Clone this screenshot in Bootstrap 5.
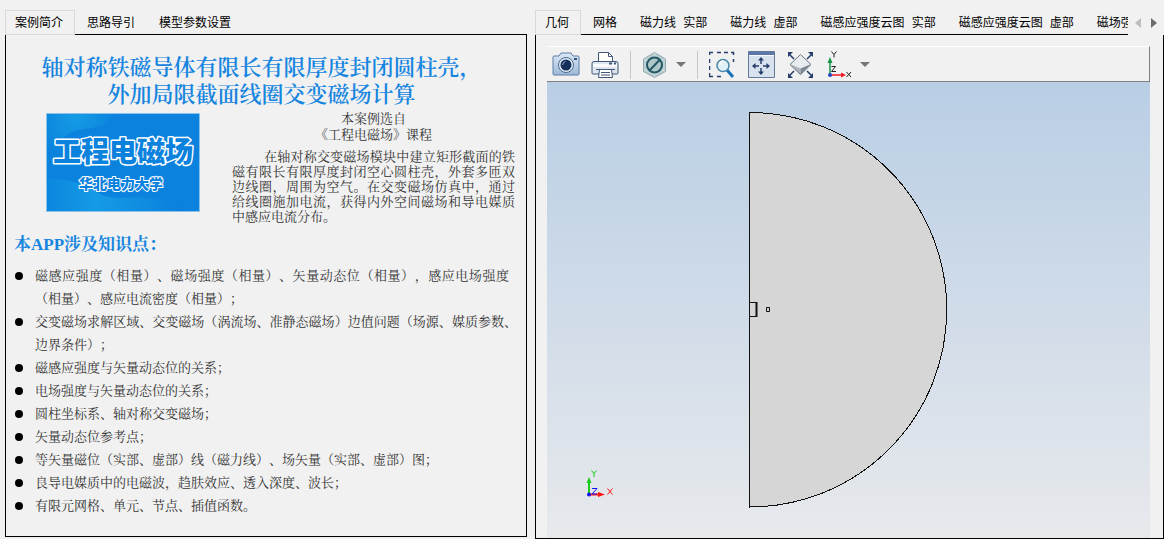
<!DOCTYPE html>
<html lang="zh-CN">
<head>
<meta charset="utf-8">
<meta name="viewport" content="width=device-width, initial-scale=1">
<title>轴对称铁磁导体交变磁场计算</title>
<link href="https://cdn.jsdelivr.net/npm/bootstrap@5.3.0/dist/css/bootstrap.min.css" rel="stylesheet">
<style>
  body { background: #f1f1f1; color: #000; font: 12px/16px "Liberation Mono", "Noto Sans CJK SC", sans-serif; }
  .workspace { display: grid; grid-template-columns: minmax(0, 522fr) minmax(0, 629fr); column-gap: 8px; padding: 10px 0 0 5px; }
  .tab-strip { height: 25px; overflow: hidden; box-shadow: inset 0 -1px #000; }
  .tab-strip button { flex: none; height: 25px; padding: 3px 12px 0; border: 0; background: none; white-space: nowrap; color: #000; }
  .tab-strip.scrollable button { padding-right: 11px; }
  .tab-strip button.active { padding: 3px 11px 0 9px; border: 1px solid #d9d9d9; background: #f1f1f1; }
  .pane { border: 1px solid #000; border-top: 0; }
  .doc { margin-bottom: 2px; padding: 19px 9px 10px 8px; font: 13px/15px "Liberation Serif", "Noto Serif CJK SC", "Noto Sans CJK SC", serif; color: #333; text-spacing-trim: space-all; }
  .doc h1 { font-size: 22px; line-height: 27px; font-weight: 600; color: #1685e0; margin: 0 0 5px; padding-right: 8px; }
  .doc h2 { font-size: 17px; line-height: 20px; font-weight: 700; color: #1685e0; margin: 11px 0 9px; }
  .intro { gap: 32px; padding: 0 2px 0 32px; }
  .cover { width: 154px; height: 99px; flex: none; }
  .course { line-height: 16px; margin: -2px 0 6px; }
  .abstract { text-align: justify; text-indent: 32px; margin: 0; }
  .topics { list-style: none; margin: 0; padding: 0; line-height: 23px; text-align: justify; }
  .topics li { position: relative; padding-left: 21px; }
  .topics li::before { content: ""; position: absolute; left: 1px; top: 8px; width: 8px; height: 8px; border-radius: 50%; background: #000; }
  .scroller { width: 36px; gap: 10px; padding-left: 6px; }
  .scroller button, .tools button { border: 0; padding: 0; background: none; display: flex; align-items: center; }
  .model { padding: 11px 13px 0 11px; }
  .tools { height: 36px; gap: 11px; padding: 2px 0 0 5px; border-top: 1px solid #fff; border-right: 1px solid #808080; border-bottom: 1px solid #808080; }
  .tools .rule { width: 1px; height: 28px; background: #c6c6c6; }
  .tools .drop { margin-left: -5px; }
  .canvas3d { position: relative; background: linear-gradient(#b9cee5, #e7e9ec); }
  .triad { position: absolute; left: 37px; bottom: 38px; }
  svg { display: block; }
  svg text { font-family: "Liberation Sans", "Noto Sans CJK SC", sans-serif; }
</style>
</head>
<body>
<main class="workspace min-vh-100">
  <section class="d-flex flex-column">
    <div class="tab-strip d-flex" role="tablist">
      <button class="active" role="tab" aria-selected="true">案例简介</button>
      <button role="tab">思路导引</button>
      <button role="tab">模型参数设置</button>
    </div>
    <article class="pane doc flex-grow-1">
      <h1 class="text-center">轴对称铁磁导体有限长有限厚度封闭圆柱壳，<br>外加局限截面线圈交变磁场计算</h1>
      <div class="intro d-flex">
        <svg class="cover" viewBox="0 0 154 99" role="img" aria-label="工程电磁场 华北电力大学">
          <defs>
            <radialGradient id="glow" gradientUnits="userSpaceOnUse" cx="30" cy="5" r="42"><stop offset="0" stop-color="#149be4"/><stop offset="1" stop-color="#0b82dd"/></radialGradient>
            <linearGradient id="wave" x1="0" x2="1"><stop offset="0" stop-color="#0b86de"/><stop offset=".35" stop-color="#159be5"/><stop offset="1" stop-color="#0a7fdc"/></linearGradient>
          </defs>
          <path fill="#0b82dd" stroke="#8cc1ea" d="M.5.5h153v98H.5z"/>
          <path fill="url(#glow)" d="M1 1h67c-6 16-30 13-42 18-11 5-9 11-12 18L1 44z"/>
          <path fill="url(#wave)" d="M1 66c24-1 38 6 51 14 14 8 28 3 50 5 19 2 30 6 36 13H1z"/>
          <g fill="#0b82dd" stroke="#fff" stroke-linejoin="round" paint-order="stroke" text-anchor="middle" font-weight="900">
            <text x="77" y="49" font-size="28" stroke-width="3">工程电磁场</text>
            <text x="75" y="76" font-size="14" stroke-width="2">华北电力大学</text>
          </g>
        </svg>
        <div class="flex-grow-1">
          <p class="course text-center">本案例选自<br>《工程电磁场》课程</p>
          <p class="abstract">在轴对称交变磁场模块中建立矩形截面的铁磁有限长有限厚度封闭空心圆柱壳，外套多匝双边线圈，周围为空气。在交变磁场仿真中，通过给线圈施加电流，获得内外空间磁场和导电媒质中感应电流分布。</p>
        </div>
      </div>
      <h2>本APP涉及知识点：</h2>
      <ul class="topics">
        <li class="pe-2">磁感应强度（相量）、磁场强度（相量）、矢量动态位（相量），感应电场强度（相量）、感应电流密度（相量）；</li>
        <li>交变磁场求解区域、交变磁场（涡流场、准静态磁场）边值问题（场源、媒质参数、边界条件）；</li>
        <li>磁感应强度与矢量动态位的关系；</li>
        <li>电场强度与矢量动态位的关系；</li>
        <li>圆柱坐标系、轴对称交变磁场；</li>
        <li>矢量动态位参考点；</li>
        <li>等矢量磁位（实部、虚部）线（磁力线）、场矢量（实部、虚部）图；</li>
        <li>良导电媒质中的电磁波，趋肤效应、透入深度、波长；</li>
        <li>有限元网格、单元、节点、插值函数。</li>
      </ul>
    </article>
  </section>

  <section class="d-flex flex-column">
    <div class="d-flex">
      <div class="tab-strip scrollable d-flex flex-grow-1" role="tablist">
        <button class="active" role="tab" aria-selected="true">几何</button>
        <button role="tab">网格</button>
        <button role="tab">磁力线 实部</button>
        <button role="tab">磁力线 虚部</button>
        <button role="tab">磁感应强度云图 实部</button>
        <button role="tab">磁感应强度云图 虚部</button>
        <button role="tab">磁场强度</button>
      </div>
      <div class="scroller d-flex flex-shrink-0">
        <button aria-label="向左滚动"><svg width="7" height="12"><path fill="#bdbdbd" d="M7 1v10L1 6z"/></svg></button>
        <button aria-label="向右滚动"><svg width="7" height="12"><path fill="#6e6e6e" d="M0 1v10l6-5z"/></svg></button>
      </div>
    </div>
    <div class="pane model d-flex flex-column flex-grow-1">
      <div class="tools d-flex align-items-center" role="toolbar">
        <button aria-label="截图"><svg width="28" height="28" viewBox="0 0 28 28">
          <defs><linearGradient id="cam" x2="0" y2="1"><stop stop-color="#dce9f6"/><stop offset="1" stop-color="#9db9d6"/></linearGradient></defs>
          <path d="M2 5h5l2-3h10l2 3h5q1 0 1 1v17q0 1-1 1H2q-1 0-1-1V6q0-1 1-1z" fill="url(#cam)" stroke="#5c7ca6"/>
          <circle cx="14" cy="14" r="7.500" fill="#e3edf7" stroke="#49678f"/><circle cx="14" cy="14" r="5.500" fill="#17305b"/><path d="M10.500 14a4 4 0 0 1 3-3.500" fill="none" stroke="#8fadd0"/><path fill="#33517d" d="M22 7h3v2h-3z"/></svg></button>
        <button aria-label="打印"><svg width="28" height="28" viewBox="0 0 28 28" stroke="#425777">
          <path fill="#fff" d="M7.500 12V1.500h10l4 4V12"/><path fill="none" d="M17.500 1.500v4h4"/>
          <path fill="#dde5ef" d="M3 10.500h22q2 0 2 2V22q0 1-1 1H2q-1 0-1-1v-9.500q0-2 2-2z"/>
          <path fill="#f8fafc" stroke="none" d="M2 13h24v3H2z"/><path d="M18 12.500h3M23 12.500h2" stroke-width="2"/>
          <path fill="#fff" d="M8.500 18.500h12l1 8h-14z"/><path d="M5 18.500h19M10 21.500h9M10 24h9"/></svg></button>
        <span class="rule"></span>
        <button aria-label="显示模式"><svg width="28" height="28" viewBox="0 0 28 28">
          <path d="M12.500 1.500L23.500 8v12.500l-11 6-11-6V8z" fill="#bccfd2" stroke="#90aaae"/><path d="M12.500 2v24M2 8l21 12M23 8L2 20" stroke="#d0dfe1"/>
          <circle cx="12.500" cy="14" r="7.500" fill="#aec8ca" stroke="#245766" stroke-width="2"/><path d="M7.500 19.500L17.500 9" stroke="#245766" stroke-width="2"/></svg></button>
        <button class="drop" aria-label="显示模式菜单"><svg width="10" height="10"><path fill="#777" d="M0 2h10L5 7z"/></svg></button>
        <span class="rule"></span>
        <button aria-label="框选缩放"><svg width="28" height="28" viewBox="0 0 28 28" fill="none">
          <path d="M.5 4V1.500H4M8 1.500h4M15 1.500h4M22 1.500h2.500V4M.5 8v4M.5 15v4M.5 22v3.500H4M8 25.500h4M24.500 8v3" stroke="#263e6b" stroke-width="1.500"/>
          <path d="M18 19l6 7" stroke="#1872b5" stroke-width="3"/><circle cx="14" cy="14.500" r="6" fill="#e1f1f7" stroke="#4886a9" stroke-width="1.500"/><path d="M10.500 14a4 4 0 0 1 4-4" stroke="#fff" stroke-width="1.500"/></svg></button>
        <button aria-label="适合窗口"><svg width="28" height="28" viewBox="0 0 28 28">
          <path d="M.5.5h26v26H.5z" fill="#d8e2ee" stroke="#64789a"/><path fill="#5c78a8" d="M1 1h25v3H1z"/><path fill="#f9fbfd" d="M1 4h25v1H1z"/>
          <path d="M13 9v4M13 17v4M6 15h5M15 15h5" stroke="#263e6b" stroke-width="1.500"/>
          <path fill="#263e6b" d="M13 6l3 3.500h-6zM13 24l3-3.500h-6zM4 15l3.500-3v6zM22 15l-3.500-3v6z"/></svg></button>
        <button aria-label="缩放至全部"><svg width="28" height="28" viewBox="0 0 28 28">
          <path fill="#e9ecef" d="M13.500 4l10.500 9-10.500 4.500L3 13z"/><path fill="#aeb5bd" d="M3 13l10.500 4.500V24z"/><path fill="#7d8996" d="M13.500 17.500L24 13 13.500 24z"/><path fill="none" stroke="#6b7785" d="M13.500 3.500L24 13.500l-10.500 10L3 13.500z"/>
          <path d="M2 3l5 5M25 3l-5 5M2 25l5-5M25 25l-5-5" stroke="#263e6b" stroke-width="1.500"/>
          <path fill="#263e6b" d="M1 1h5L1 6zM26 1h-5l5 5zM1 27h5l-5-5zM26 27h-5l5-5z"/></svg></button>
        <button aria-label="视图方向"><svg width="28" height="28" viewBox="0 0 28 28">
          <path d="M4 24V10" stroke="#159447" stroke-width="1.500"/><path fill="#159447" d="M4 6l2.500 6h-5z"/>
          <path d="M4 24h12" stroke="#ed1c24" stroke-width="1.500"/><path fill="#ed1c24" d="M20 24l-5 2.500v-5z"/><circle cx="4" cy="24" r="2" fill="#2345c5"/>
          <path fill="none" stroke="#222" d="M5.500.500l2.500 3 2.500-3M8 3.500v3M5.500 15.500h4l-4 5h4.500M20.500 21l4.500 5M25 21l-4.500 5"/></svg></button>
        <button class="drop" aria-label="视图方向菜单"><svg width="10" height="10"><path fill="#777" d="M0 2h10L5 7z"/></svg></button>
      </div>
      <div class="canvas3d d-flex align-items-center justify-content-center flex-grow-1">
        <svg width="200" height="396" viewBox="0 0 200 396" fill="none" stroke="#111" role="img" aria-label="求解区域">
          <path fill="#d6d6d6" shape-rendering="crispEdges" d="M.5.500a197 197 0 0 1 0 394.500z"/>
          <path d="M.5 190.500h7v14H.5"/><path d="M7.500 190v15" stroke-width="2"/><path d="M17.500 195.500h3v4h-3z"/>
        </svg>
        <svg class="triad" width="32" height="32" viewBox="0 0 32 32" fill="none">
          <path d="M5 26V12" stroke="#1ccc1c" stroke-width="2"/><path fill="#1ccc1c" d="M5 9l2.500 6h-5z"/>
          <path d="M5 26.500h12" stroke="#f22" stroke-width="2"/><path fill="#f11" d="M21 26.500l-7 2.500v-5z"/><circle cx="5" cy="26.500" r="2" fill="#11e"/>
          <path stroke="#1ccc1c" d="M7.500 2.500L10 5.500l2.500-3M10 5v4"/><path stroke="#11e" d="M8 20.500h5l-5 5.500h5"/><path stroke="#f11" d="M23.500 20.500l5 6M28.500 20.500l-5 6"/>
        </svg>
      </div>
    </div>
  </section>
</main>
<script src="https://cdn.jsdelivr.net/npm/bootstrap@5.3.0/dist/js/bootstrap.bundle.min.js"></script>
</body>
</html>
